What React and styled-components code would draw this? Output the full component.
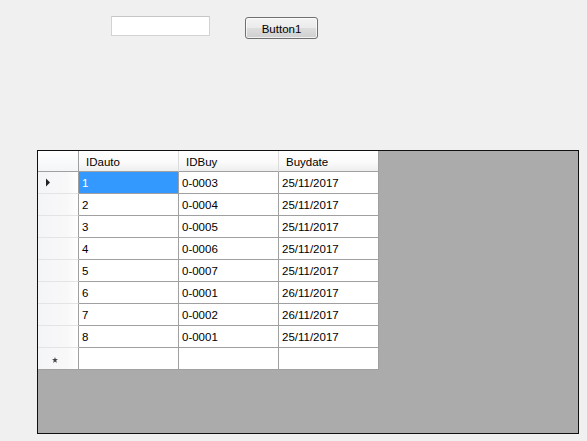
import React from "react";
import styled, { createGlobalStyle } from "styled-components";

const Global = createGlobalStyle`
  html, body { margin: 0; padding: 0; background: #f0f0f0; }
  body { font-family: "Liberation Sans", Arial, sans-serif; font-size: 11.5px; color: #000; }
`;

const Page = styled.div`
  width: 587px;
  height: 441px;
  overflow: hidden;
  background: #f0f0f0;
`;

const TopBar = styled.div`
  display: flex;
  align-items: flex-start;
  padding: 16px 0 0 111px;
  gap: 35px;
  height: 150px;
  box-sizing: border-box;
`;

const TextBox = styled.input`
  box-sizing: border-box;
  width: 99px;
  height: 20px;
  margin: 0;
  padding: 0 3px;
  border: 1px solid #d3d3d3;
  border-top-color: #c6c6c6;
  background: #fff;
  outline: none;
  font: inherit;
`;

const Button = styled.button`
  box-sizing: border-box;
  width: 73px;
  height: 22px;
  margin: 1px 0 0;
  padding: 1px 0 0;
  border: 1px solid #707070;
  border-radius: 3px;
  background: linear-gradient(#f3f3f3 0%, #ebebeb 48%, #dddddd 52%, #cfcfcf 100%);
  box-shadow: inset 0 0 0 1px rgba(255,255,255,0.7);
  font: inherit;
  color: #000;
`;

const GridFrame = styled.div`
  box-sizing: border-box;
  margin-left: 37px;
  width: 542px;
  height: 284px;
  border: 1px solid #101010;
  background: #ababab;
`;

const Table = styled.div`
  display: grid;
  grid-template-columns: 41px 100px 100px 100px;
  grid-template-rows: 21px;
  grid-auto-rows: 22px;
  width: 341px;
`;

const Corner = styled.div`
  box-sizing: border-box;
  background: linear-gradient(#ffffff, #f4f5f7);
  border-right: 1px solid #a0a0a0;
  border-bottom: 1px solid #a0a0a0;
`;

const ColHead = styled.div`
  box-sizing: border-box;
  display: flex;
  align-items: center;
  padding-left: 7px;
  padding-top: 2px;
  background: linear-gradient(#ffffff 0%, #fafafa 60%, #eeeeee 100%);
  border-right: 1px solid ${p => (p.$last ? "#a0a0a0" : "#dcdcdc")};
  border-bottom: 1px solid #a0a0a0;
`;

const RowHead = styled.div`
  box-sizing: border-box;
  display: flex;
  align-items: center;
  justify-content: ${p => (p.$center ? "center" : "flex-start")};
  padding-left: ${p => (p.$center ? "0" : "7px")};
  background: linear-gradient(90deg, #f4f5f7 0%, #f8f8f9 70%, #ffffff 100%);
  border-right: 1px solid #a0a0a0;
  border-bottom: 1px solid ${p => (p.$last ? "#a0a0a0" : "#e4e4e4")};
`;

const Cell = styled.div`
  box-sizing: border-box;
  display: flex;
  align-items: center;
  padding-left: 3px;
  padding-top: 1px;
  background: ${p => (p.$selected ? "#3399ff" : "#ffffff")};
  color: ${p => (p.$selected ? "#ffffff" : "#000000")};
  border-right: 1px solid #a0a0a0;
  border-bottom: 1px solid #a0a0a0;
`;

const Arrow = () => (
  <svg width="6" height="9" viewBox="0 0 6 9">
    <path d="M1 0.5 L5 4.5 L1 8.5 Z" fill="#222" />
  </svg>
);

const Star = () => (
  <svg width="6" height="6" viewBox="0 0 6 6" style={{ marginLeft: -6, marginTop: 2 }}>
    <path d="M3 0 L3.7 2 L6 2.2 L4.2 3.6 L4.8 6 L3 4.6 L1.2 6 L1.8 3.6 L0 2.2 L2.3 2 Z" fill="#444" />
  </svg>
);

const rows = [
  ["1", "0-0003", "25/11/2017"],
  ["2", "0-0004", "25/11/2017"],
  ["3", "0-0005", "25/11/2017"],
  ["4", "0-0006", "25/11/2017"],
  ["5", "0-0007", "25/11/2017"],
  ["6", "0-0001", "26/11/2017"],
  ["7", "0-0002", "26/11/2017"],
  ["8", "0-0001", "25/11/2017"],
];

export default function App() {
  return (
    <Page>
      <Global />
      <TopBar>
        <TextBox />
        <Button>Button1</Button>
      </TopBar>
      <GridFrame>
        <Table>
          <Corner />
          <ColHead>IDauto</ColHead>
          <ColHead>IDBuy</ColHead>
          <ColHead $last>Buydate</ColHead>
          {rows.map((r, i) => (
            <React.Fragment key={i}>
              <RowHead>{i === 0 ? <Arrow /> : null}</RowHead>
              <Cell $selected={i === 0}>{r[0]}</Cell>
              <Cell>{r[1]}</Cell>
              <Cell>{r[2]}</Cell>
            </React.Fragment>
          ))}
          <RowHead $center $last><Star /></RowHead>
          <Cell />
          <Cell />
          <Cell />
        </Table>
      </GridFrame>
    </Page>
  );
}
